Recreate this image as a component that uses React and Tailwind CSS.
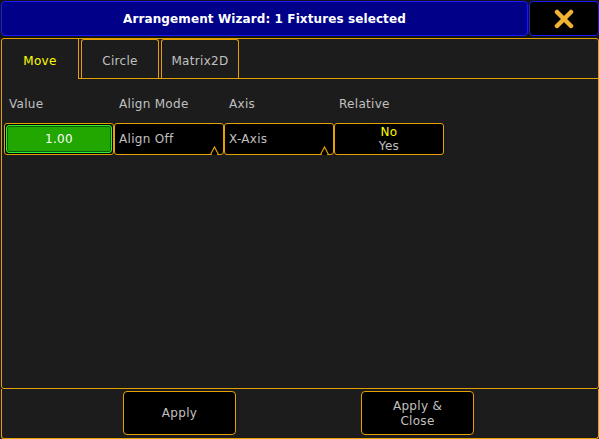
import React from "react";

const FONT = { fontFamily: '"DejaVu Sans", "Liberation Sans", sans-serif' };

function Notch() {
  return (
    <svg className="absolute bottom-[-1px] right-[4px]" width="9" height="10" viewBox="0 0 9 10">
      <polyline points="0.5,9.5 4.5,2 8.5,9.5" fill="none" stroke="#e5a100" strokeWidth="1.2" />
      <polygon points="1.6,10 4.5,4.2 7.4,10" fill="#000" />
    </svg>
  );
}

export default function App() {
  return (
    <div className="w-[599px] h-[439px] bg-[#1c1c1c] flex flex-col overflow-hidden select-none tracking-[0.3px]" style={FONT}>
      {/* header */}
      <div className="h-[38px] flex pl-[1px] pt-[1px] pb-[2px] gap-[1px] bg-[#141414]">
        <div className="w-[527px] h-[35px] rounded-[4px] border border-[#1a1aff] bg-[#000088] flex items-center justify-center">
          <span className="text-white font-bold text-[12px] tracking-[0.1px] pt-[1px]">Arrangement Wizard: 1 Fixtures selected</span>
        </div>
        <div className="w-[70px] h-[35px] rounded-[4px] border border-[#1a1aff] bg-black flex items-center justify-center">
          <svg width="22" height="20" viewBox="0 0 22 20">
            <line x1="4" y1="3" x2="18" y2="17" stroke="#f2b233" strokeWidth="4.5" strokeLinecap="round" />
            <line x1="18" y1="3" x2="4" y2="17" stroke="#f2b233" strokeWidth="4.5" strokeLinecap="round" />
          </svg>
        </div>
      </div>

      {/* upper box */}
      <div className="ml-[1px] w-[598px] h-[351px] border border-[#e5a100] rounded-[3px] flex flex-col">
        {/* tabs */}
        <div className="h-[40px] flex">
          <div className="w-[77px] h-full border-r border-[#e5a100] flex items-center justify-center pt-[3px]">
            <span className="text-[#ffff00] text-[12px]">Move</span>
          </div>
          <div className="flex-1 h-full border-b border-[#e5a100] flex pl-[2px] gap-[2px]">
            <div className="w-[78px] h-full border-x border-t border-[#e5a100] rounded-t-[3px] flex items-center justify-center pt-[3px]">
              <span className="text-[#c0c0c0] text-[12px]">Circle</span>
            </div>
            <div className="w-[78px] h-full border-x border-t border-[#e5a100] rounded-t-[3px] flex items-center justify-center pt-[3px]">
              <span className="text-[#c0c0c0] text-[12px]">Matrix2D</span>
            </div>
          </div>
        </div>

        {/* content */}
        <div className="pl-[2px]">
          <div className="grid grid-cols-[110px_110px_110px_110px] pt-[18px] text-[12px] leading-[14px] text-[#c0c0c0]">
            <div className="pl-[5px]">Value</div>
            <div className="pl-[5px]">Align Mode</div>
            <div className="pl-[5px]">Axis</div>
            <div className="pl-[5px]">Relative</div>
          </div>
          <div className="grid grid-cols-[110px_110px_110px_110px] mt-[12px] h-[32px] text-[12px]">
            <div className="h-full border border-[#e5a100] rounded-[3px] bg-black p-px">
              <div className="h-full rounded-[3px] border border-[#33ee33] bg-[#22a600] shadow-[inset_0_0_0_1px_#0b5c0b] flex items-center justify-center text-white">
                1.00
              </div>
            </div>
            <div className="relative h-full border border-[#e5a100] rounded-[3px] bg-black flex items-center pl-[4px] text-[#c0c0c0]">
              Align Off
              <Notch />
            </div>
            <div className="relative h-full border border-[#e5a100] rounded-[3px] bg-black flex items-center pl-[4px] text-[#c0c0c0]">
              X-Axis
              <Notch />
            </div>
            <div className="h-full border border-[#e5a100] rounded-[3px] bg-black flex flex-col items-center justify-center leading-[14px]">
              <span className="text-[#ffff00]">No</span>
              <span className="text-[#c0c0c0]">Yes</span>
            </div>
          </div>
        </div>
      </div>

      {/* lower box */}
      <div className="ml-[1px] w-[598px] h-[50px] border-x border-b border-[#e5a100] rounded-b-[3px] flex pt-[2px]">
        <div className="ml-[121px] w-[113px] h-[44px] border border-[#e5a100] rounded-[4px] bg-black flex items-center justify-center text-[12px] text-[#c0c0c0]">
          Apply
        </div>
        <div className="ml-[125px] w-[113px] h-[44px] border border-[#e5a100] rounded-[4px] bg-black flex flex-col items-center justify-center text-[12px] leading-[15px] text-[#c0c0c0] pt-[2px]">
          <span>Apply &amp;</span>
          <span>Close</span>
        </div>
      </div>
    </div>
  );
}
